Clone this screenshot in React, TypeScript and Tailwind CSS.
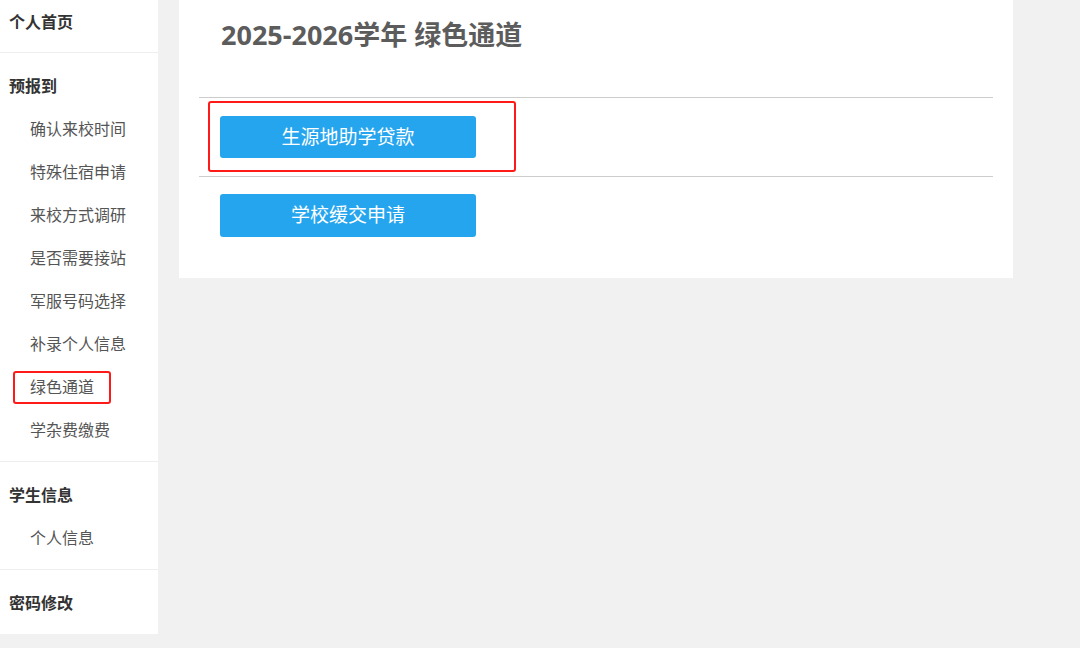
import React from "react";

const font = { fontFamily: '"Microsoft YaHei", "Open Sans", "Noto Sans CJK SC", sans-serif' };

function Section({ title, items, first }: { title: string; items: string[]; first?: boolean }) {
  return (
    <div className={first ? "pt-0 pb-[9px]" : "pt-[11px] pb-[10px] border-t border-[#eeeeee]"}>
      <div className="h-[43px] flex items-center pl-[9px] text-[16px] font-bold text-[#333333]">{title}</div>
      {items.map((it) => (
        <div key={it} className="relative h-[43px] flex items-center pl-[30px] text-[16px] text-[#555555]">
          {it}
          {it === "绿色通道" && (
            <div className="absolute left-[13px] top-[6px] w-[98px] h-[33px] border-2 border-[#ff1a1a] rounded-[3px]" />
          )}
        </div>
      ))}
    </div>
  );
}

export default function App() {
  return (
    <div style={font} className="w-[1080px] h-[648px] bg-[#f1f1f1] flex items-start overflow-hidden">
      <div className="w-[158px] bg-white">
        <Section title="个人首页" items={[]} first />
        <Section
          title="预报到"
          items={["确认来校时间", "特殊住宿申请", "来校方式调研", "是否需要接站", "军服号码选择", "补录个人信息", "绿色通道", "学杂费缴费"]}
        />
        <Section title="学生信息" items={["个人信息"]} />
        <Section title="密码修改" items={[]} />
      </div>
      <div className="ml-[21px] w-[834px] bg-white px-5">
        <div className="h-[97px] pl-[22px] pt-[16px] text-[27px] font-bold text-[#5c5c5c] leading-[38px]">
          2025-2026学年 绿色通道
        </div>
        <div className="relative border-t border-[#cccccc] py-[18px] pl-[21px]">
          <button className="w-[256px] h-[42px] bg-[#26a5ef] rounded-[3px] text-white text-[19px]">生源地助学贷款</button>
          <div className="absolute left-[9px] top-[3px] w-[308px] h-[71px] border-2 border-[#ff1a1a] rounded-[3px]" />
        </div>
        <div className="border-t border-[#cccccc] pt-[17px] pb-[41px] pl-[21px]">
          <button className="w-[256px] h-[43px] bg-[#26a5ef] rounded-[3px] text-white text-[19px]">学校缓交申请</button>
        </div>
      </div>
    </div>
  );
}
